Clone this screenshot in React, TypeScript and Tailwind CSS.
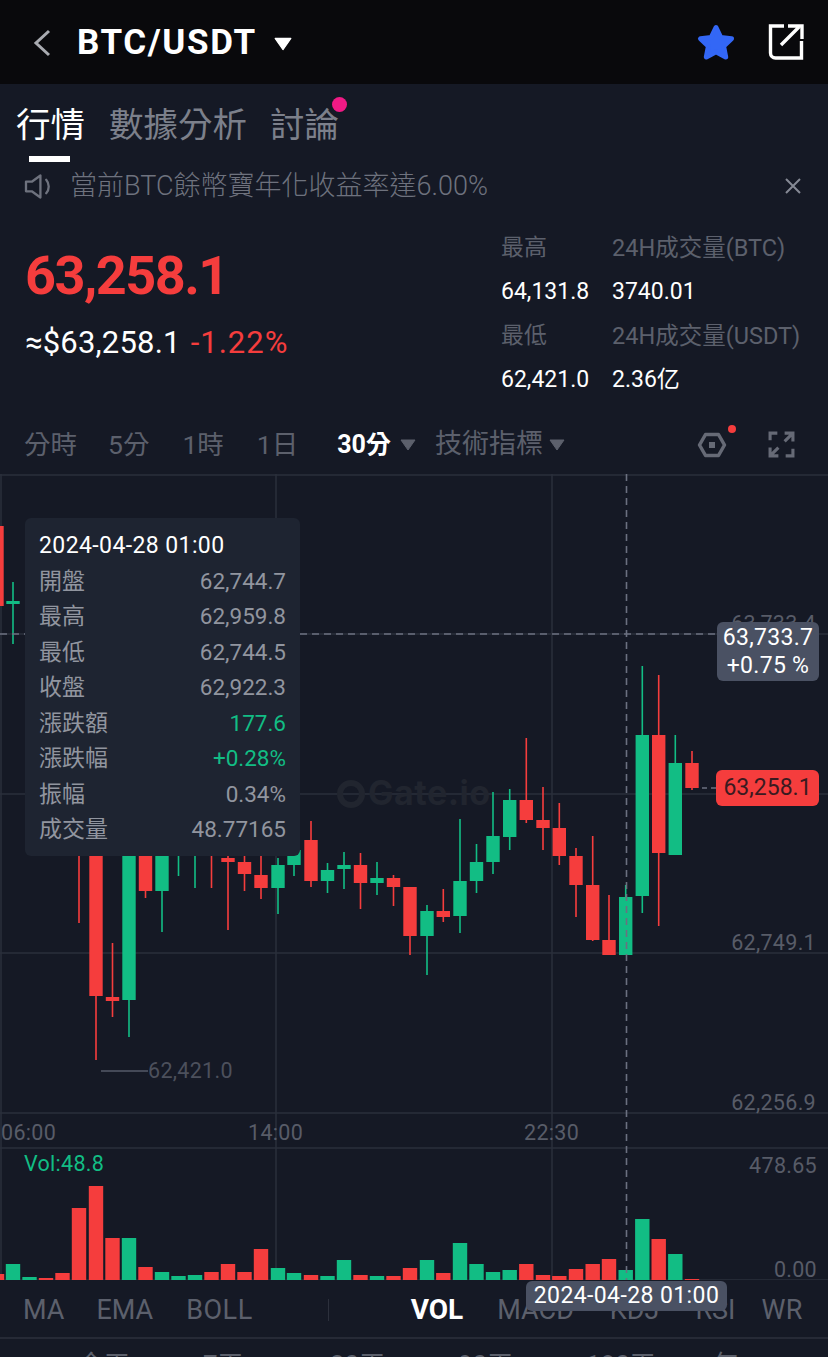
const RED = "#f53d3d"
const GREEN = "#12bd84"

// [green?, wickTop, bodyTop, bodyBottom, wickBottom, x] in chart coords (page y - 474)
const candles: [number, number, number, number, number, number][] = [
    [0, 0, 52, 132, 132, -3],
    [1, 108, 127, 130, 170, 13],
    [0, 366, 380, 380, 449, 79],
    [0, 370, 370, 522, 586, 96],
    [0, 469, 523, 527, 543, 112.5],
    [1, 370, 370, 526, 563, 129],
    [0, 370, 370, 417, 424, 145.5],
    [1, 370, 370, 417, 458, 162],
    [1, 366, 380, 380, 402, 178.5],
    [1, 366, 380, 380, 414, 195],
    [0, 366, 380, 380, 414, 211.5],
    [0, 370, 384, 388, 456, 228],
    [0, 370, 388, 400, 417, 244.5],
    [0, 370, 401, 414, 425, 261],
    [1, 384, 391, 414, 440, 278],
    [1, 376, 376, 391, 402, 294],
    [0, 347, 366, 407, 413, 311],
    [1, 389, 396, 407, 419, 327.5],
    [1, 378, 391, 395, 415, 344],
    [0, 379, 391, 409, 435, 360.5],
    [1, 388, 404, 409, 421, 377],
    [0, 401, 404, 413, 432, 393.5],
    [0, 413, 413, 462, 481, 410],
    [1, 431, 437, 462, 501, 427],
    [0, 415, 437, 443, 448, 443.3],
    [1, 345, 407, 442, 459, 460],
    [1, 370, 388, 407, 419, 476.5],
    [1, 318, 362, 388, 400, 493],
    [1, 315, 326, 363, 376, 509.7],
    [0, 264, 326, 346, 349, 526.3],
    [0, 313, 346, 354, 376, 543],
    [0, 329, 354, 382, 391, 559.3],
    [0, 374, 382, 411, 443, 576],
    [0, 362, 411, 466, 467, 592.7],
    [0, 421, 466, 481, 481, 609],
    [1, 411, 423, 481, 481, 625.7],
    [1, 192, 261, 422, 439, 642.3],
    [0, 201, 261, 379, 452, 658.7],
    [1, 261, 289, 381, 381, 675.3],
    [0, 277, 289, 314, 316, 692],
]

// [green?, height, x]
const volumes: [number, number, number][] = [
    [0, 6, -3], [1, 16, 13], [1, 3, 29.5], [0, 2, 46], [0, 7, 62.5], [0, 72, 79], [0, 94, 96],
    [0, 42, 112.5], [1, 42, 129], [0, 13, 145.5], [1, 8, 162], [1, 4, 178.5], [1, 5, 195],
    [0, 8, 211.5], [0, 16, 228], [0, 8, 244.5], [0, 31, 261], [1, 12, 278], [1, 7, 294],
    [0, 5, 311], [1, 4, 327.5], [1, 20, 344], [0, 5, 360.5], [1, 4, 377], [0, 4, 393.5],
    [0, 12, 410], [1, 20, 427], [0, 7, 443.3], [1, 37, 460], [1, 16, 476.5], [1, 8, 493],
    [1, 10, 509.7], [0, 16, 526.3], [0, 5, 543], [0, 4, 559.3], [0, 11, 576], [0, 16, 592.7],
    [0, 21, 609], [1, 10, 625.7], [1, 61, 642.3], [0, 41, 658.7], [1, 26, 675.3], [0, 1, 692],
]

const tooltipRows = [
    ["開盤", "62,744.7"],
    ["最高", "62,959.8"],
    ["最低", "62,744.5"],
    ["收盤", "62,922.3"],
    ["漲跌額", "177.6", "up"],
    ["漲跌幅", "+0.28%", "up"],
    ["振幅", "0.34%"],
    ["成交量", "48.77165"],
]

function Caret({ className }: { className: string }) {
    return (
        <svg viewBox="0 0 16 12" className={className}>
            <path d="M1 1h14L8 11z" fill="currentColor" stroke="currentColor" strokeLinejoin="round" />
        </svg>
    )
}

function ChartDrawing() {
    return (
        <svg width="828" height="806" viewBox="0 0 828 806" className="block">
            <g stroke="#2a2f3b" strokeWidth="1.5">
                <path d="M0 1H828M0 160H828M0 320H828M0 479H828M0 639H828M0 674H828M0 806H828" />
                <path d="M1 0V806M276 0V806M552 0V806" />
            </g>
            <g fill="#21252f">
                <circle cx="351" cy="320" r="11" fill="none" stroke="#21252f" strokeWidth="6" />
                <text x="368" y="331" fontSize="34" letterSpacing="0.5" fontWeight="700" fontFamily="Inter, sans-serif">
                    Gate.io
                </text>
            </g>
            {candles.map(([up, wt, bt, bb, wb, x]) => (
                <g key={x} fill={up ? GREEN : RED}>
                    <rect x={x - 0.8} y={wt} width="1.6" height={wb - wt} />
                    {bb > bt && <rect x={x - 6.7} y={bt} width="13.4" height={bb - bt} />}
                </g>
            ))}
            {volumes.map(([up, h, x]) => (
                <rect key={x} x={x - 7.2} y={806 - h} width="14.4" height={h} fill={up ? GREEN : RED} />
            ))}
            <path d="M0 160H716" stroke="#6b7080" strokeWidth="1.4" strokeDasharray="7 5" />
            <path d="M626.5 0V806" stroke="#6b7080" strokeWidth="1.6" strokeDasharray="7 5" />
            <path d="M702 314H716" stroke="#6b7080" strokeWidth="1.4" strokeDasharray="5 4" />
            <path d="M101 597H148" stroke="#555a69" strokeWidth="1.5" />
        </svg>
    )
}

function AxisLabel({ className, children }: { className: string; children: React.ReactNode }) {
    return <span className={`absolute text-[21.500px] leading-none tracking-[0.3px] ${className}`}>{children}</span>
}

export default function App() {
    return (
        <div
            className="w-[828px] h-[1357px] overflow-hidden bg-[#151925] text-white"
            style={{ fontFamily: "Roboto, 'Noto Sans CJK TC', sans-serif" }}
        >
            <header className="h-[84px] bg-[#09090c] flex items-center pl-[33px] pr-[24px]">
                <svg viewBox="0 0 18 28" className="mt-[2px] w-[18px] h-[28px]" fill="none" stroke="#a9abb1" strokeWidth="3">
                    <path d="M16 2L3 14l13 12" />
                </svg>
                <h1 className="ml-[26px] mt-[3px] text-[35px] font-bold tracking-[1.600px]">BTC/USDT</h1>
                <Caret className="ml-[17px] mt-[3px] w-[18px] h-[14px] text-white" />
                <div className="ml-auto flex items-center gap-[32px]">
                    <svg viewBox="0 0 40 38" className="w-[40px] h-[38px]">
                        <path
                            d="M20 4.500l4.800 10 10.700 1.300-7.900 7.400 2.100 10.800L20 28.700 10.300 34l2.100-10.800-7.900-7.400 10.700-1.300z"
                            fill="#3367f6"
                            stroke="#3367f6"
                            strokeWidth="5"
                            strokeLinejoin="round"
                        />
                    </svg>
                    <svg viewBox="0 0 36 38" className="w-[36px] h-[38px]" fill="none" stroke="#fff" strokeWidth="3.400">
                        <path d="M16 3H2.500v27a5 5 0 0 0 5 5h26V18" />
                        <path d="M13 22L31 4M20 3h14v13" />
                    </svg>
                </div>
            </header>

            <nav className="h-[72px] flex pl-[16px] pt-[17px] gap-[24px] text-[34.500px] leading-[48px] font-normal">
                <div className="relative text-white">
                    行情
                    <div className="absolute left-[13px] top-[55px] w-[41px] h-[6px] bg-white" />
                </div>
                <div className="text-[#7c808b]">數據分析</div>
                <div className="relative -ml-[1px] text-[#7c808b]">
                    討論
                    <div className="absolute -right-[8px] top-[-4px] w-[15px] h-[15px] rounded-full bg-[#f01a85]" />
                </div>
            </nav>

            <div className="h-[60px] flex items-center pl-[24px] pr-[27px] text-[#6e727e]">
                <svg viewBox="0 0 30 26" className="w-[29px] h-[25px]" fill="none" stroke="currentColor" strokeWidth="2.400" strokeLinejoin="round">
                    <path d="M2 8h6l9-6.500v23L8 18H2z" />
                    <path d="M23 6c3.500 4 3.500 10 0 14" strokeLinecap="round" />
                </svg>
                <span className="ml-[17px] text-[27px] font-light">當前BTC餘幣寶年化收益率達6.00%</span>
                <svg viewBox="0 0 16 16" className="ml-auto w-[16px] h-[16px]" fill="none" stroke="#858994" strokeWidth="2">
                    <path d="M1 1l14 14M15 1L1 15" />
                </svg>
            </div>

            <section className="h-[199px] flex">
                <div className="w-[501px] pl-[25px] pt-[28px]">
                    <div className="text-[54px] leading-[64px] font-bold tracking-[-1.500px] text-[#f53d3d]">63,258.1</div>
                    <div className="mt-[13px] text-[31px] leading-[44px] tracking-[0.200px] flex">
                        <span>≈$63,258.1</span>
                        <span className="ml-[10px] text-[#f53d3d] tracking-[1px]">-1.22%</span>
                    </div>
                </div>
                <div className="grid grid-cols-[111px_1fr] auto-rows-[44px] pt-[10px] text-[23px] leading-[44px] whitespace-nowrap">
                    <span className="text-[#5c606c]">最高</span>
                    <span className="text-[#5c606c] text-[23.500px]">24H成交量(BTC)</span>
                    <span>64,131.8</span>
                    <span>3740.01</span>
                    <span className="text-[#5c606c]">最低</span>
                    <span className="text-[#5c606c] text-[23.500px]">24H成交量(USDT)</span>
                    <span>62,421.0</span>
                    <span>2.36亿</span>
                </div>
            </section>

            <div className="h-[59px] flex items-center pl-[24px] pr-[33px] text-[26.500px] text-[#5c606c]">
                <span>分時</span>
                <span className="ml-[31px]">5分</span>
                <span className="ml-[33px]">1時</span>
                <span className="ml-[33px]">1日</span>
                <span className="ml-[39px] text-[25px] font-bold text-white">30分</span>
                <Caret className="ml-[9px] w-[16px] h-[12px] text-[#5c606c]" />
                <span className="ml-[19px] text-[27px]">技術指標</span>
                <Caret className="ml-[6px] w-[16px] h-[12px] text-[#5c606c]" />
                <div className="relative ml-auto">
                    <svg viewBox="0 0 30 26" className="w-[30px] h-[26px]" fill="none" stroke="#666a76">
                        <path d="M2.500 13L8.500 2.500h13L27.500 13l-6 10.500h-13z" strokeWidth="3.500" strokeLinejoin="round" />
                        <rect x="12" y="10" width="6" height="6" fill="#666a76" stroke="none" />
                    </svg>
                    <div className="absolute -right-[9px] -top-[7px] w-[8px] h-[8px] rounded-full bg-[#f53d3d]" />
                </div>
                <svg viewBox="0 0 26 26" className="ml-[41px] w-[27px] h-[27px]" fill="none" stroke="#666a76" strokeWidth="3">
                    <path d="M2 9V2h7M16 2h8v8M24 2l-8 8M2 16v8h8M2 24l8-8M24 17v7h-7" />
                </svg>
            </div>

            <div className="relative h-[806px] text-[#585c68]">
                <ChartDrawing />

                <AxisLabel className="right-[12px] top-[139px]">63,733.4</AxisLabel>

                <div className="absolute left-[25px] top-[44px] w-[275px] h-[338px] rounded-[6px] bg-[#1e2431] px-[14px] pt-[10px] text-[23px] leading-[35.500px] text-[#91959f]">
                    <div className="text-white tracking-[0.4px]">2024-04-28 01:00</div>
                    {tooltipRows.map(([label, value, tone]) => (
                        <div key={label} className="flex justify-between">
                            <span>{label}</span>
                            <span className={`text-[22.500px] ${tone === "up" ? "text-[#12bd84]" : ""}`}>{value}</span>
                        </div>
                    ))}
                </div>

                <AxisLabel className="left-[148px] top-[586px] text-[#4c505c]">62,421.0</AxisLabel>
                <AxisLabel className="right-[12px] top-[458px]">62,749.1</AxisLabel>
                <AxisLabel className="right-[12px] top-[618px]">62,256.9</AxisLabel>
                <AxisLabel className="left-[1px] top-[648px]">06:00</AxisLabel>
                <AxisLabel className="left-[248px] top-[648px]">14:00</AxisLabel>
                <AxisLabel className="left-[524px] top-[648px]">22:30</AxisLabel>
                <AxisLabel className="left-[24px] top-[679px] text-[#12bd84]">Vol:48.8</AxisLabel>
                <AxisLabel className="right-[11px] top-[681px]">478.65</AxisLabel>
                <AxisLabel className="right-[11px] top-[785px]">0.00</AxisLabel>

                <div className="absolute left-[717px] top-[148px] w-[102px] h-[59px] rounded-[6px] bg-[#4a5163] text-center text-[23px] leading-[28px] pt-[2px] tracking-[0.3px] text-white">
                    63,733.7
                    <br />
                    +0.75 %
                </div>
                <div className="absolute left-[716px] top-[296px] w-[103px] h-[36px] rounded-[6px] bg-[#f53d3d] text-center text-[23px] leading-[36px] text-[#3a1a20]">
                    63,258.1
                </div>
            </div>

            <div className="relative h-[59px] border-b-[2px] border-[#262a36] text-[27px] text-[#5c606c]">
                <div className="flex items-center h-[57px] pt-[3px] pl-[23px] pr-[25px]">
                    <span>MA</span>
                    <span className="ml-[32px]">EMA</span>
                    <span className="ml-[33px] tracking-[0.5px]">BOLL</span>
                    <span className="ml-[75px] w-px h-[22px] bg-[#2c303c]" />
                    <span className="ml-[82px] text-[28px] font-bold text-white">VOL</span>
                    <span className="ml-[34px]">MACD</span>
                    <span className="ml-[36px]">KDJ</span>
                    <span className="ml-[36px]">RSI</span>
                    <span className="ml-auto tracking-[0.5px]">WR</span>
                </div>
                <div className="absolute left-[526px] top-[1px] w-[201px] h-[30px] rounded-[6px] bg-[#4a5163] text-center text-[23px] leading-[30px] tracking-[0.4px] text-white">
                    2024-04-28 01:00
                </div>
            </div>

            <div className="relative h-[18px] text-[26px] leading-[36px] text-[#5c606c] overflow-hidden">
                <span className="absolute left-[78px] top-[8px]">今天</span>
                <span className="absolute left-[203px] top-[8px]">7天</span>
                <span className="absolute left-[330px] top-[8px]">30天</span>
                <span className="absolute left-[458px] top-[8px]">90天</span>
                <span className="absolute left-[586px] top-[8px]">180天</span>
                <span className="absolute left-[713px] top-[8px]">年</span>
            </div>
        </div>
    )
}
